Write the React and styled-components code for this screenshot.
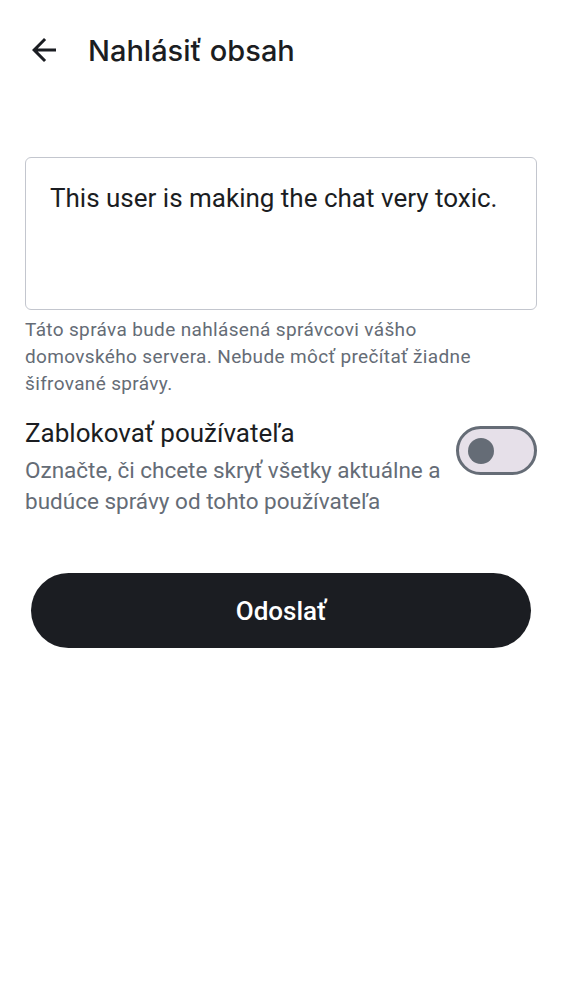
import { useState } from "react";
import styled, { createGlobalStyle } from "styled-components";

const Global = createGlobalStyle`
  html, body { margin: 0; padding: 0; background: #fff; }
  body { font-family: Roboto, "Noto Sans", sans-serif; }
`;

const Page = styled.div`
  width: 562px;
  min-height: 1000px;
  background: #fff;
  display: flex;
  flex-direction: column;
`;

const TopBar = styled.header`
  height: 100px;
  display: flex;
  align-items: center;
  padding: 0 0 0 26px;
  gap: 26px;
  box-sizing: border-box;
`;

const BackButton = styled.button`
  width: 36px;
  height: 36px;
  padding: 0;
  border: none;
  background: none;
  display: flex;
  align-items: center;
  justify-content: center;
  color: #1b1d22;
  cursor: pointer;
`;

const Title = styled.h1`
  margin: 0;
  font-family: Inter, Roboto, sans-serif;
  font-size: 29px;
  font-weight: 500;
  color: #1b1d22;
`;

const Content = styled.main`
  padding: 57px 25px 0 25px;
  display: flex;
  flex-direction: column;
`;

const TextArea = styled.textarea`
  box-sizing: border-box;
  width: 512px;
  height: 153px;
  resize: none;
  border: 1.5px solid #c3c6ce;
  border-radius: 6px;
  padding: 25px 24px;
  font-family: Roboto, sans-serif;
  font-size: 26px;
  line-height: 30px;
  color: #1b1d22;
  outline: none;
`;

const Helper = styled.p`
  margin: 6px 30px 0 0;
  font-size: 19px;
  line-height: 27px;
  letter-spacing: 0.35px;
  color: #656c76;
`;

const ToggleRow = styled.div`
  margin-top: 20px;
  display: flex;
  align-items: flex-start;
  justify-content: space-between;
  gap: 12px;
`;

const ToggleText = styled.div`
  display: flex;
  flex-direction: column;
`;

const ToggleLabel = styled.div`
  font-size: 26px;
  line-height: 32px;
  color: #1b1d22;
`;

const ToggleDesc = styled.div`
  margin-top: 6px;
  font-size: 22.5px;
  line-height: 31px;
  color: #656c76;
`;

const Switch = styled.button`
  flex: none;
  margin-top: 9px;
  width: 81px;
  height: 49px;
  box-sizing: border-box;
  border-radius: 25px;
  border: 3px solid #656c76;
  background: ${(p) => (p.$on ? "#1b1d22" : "#e6e0e9")};
  padding: 0;
  position: relative;
  cursor: pointer;
`;

const Thumb = styled.span`
  position: absolute;
  top: 50%;
  left: ${(p) => (p.$on ? "43px" : "9px")};
  width: 26px;
  height: 26px;
  margin-top: -13px;
  border-radius: 50%;
  background: ${(p) => (p.$on ? "#fff" : "#656c76")};
`;

const Submit = styled.button`
  margin: 56px 6px 0 6px;
  height: 75px;
  border: none;
  border-radius: 38px;
  background: #1b1d22;
  color: #fff;
  font-family: Roboto, sans-serif;
  font-size: 26px;
  font-weight: 500;
  cursor: pointer;
`;

const App = () => {
  const [text, setText] = useState("This user is making the chat very toxic.");
  const [block, setBlock] = useState(false);

  return (
    <Page>
      <Global />
      <TopBar>
        <BackButton aria-label="Späť">
          <svg width="36" height="36" viewBox="0 0 24 24" fill="currentColor">
            <path d="M20 11H7.83l5.59-5.59L12 4l-8 8 8 8 1.41-1.41L7.83 13H20v-2z" />
          </svg>
        </BackButton>
        <Title>Nahlásiť obsah</Title>
      </TopBar>

      <Content>
        <TextArea value={text} onChange={(e) => setText(e.target.value)} />
        <Helper>
          Táto správa bude nahlásená správcovi vášho domovského servera.
          Nebude môcť prečítať žiadne šifrované správy.
        </Helper>

        <ToggleRow>
          <ToggleText>
            <ToggleLabel>Zablokovať používateľa</ToggleLabel>
            <ToggleDesc>
              Označte, či chcete skryť všetky aktuálne a budúce správy od
              tohto používateľa
            </ToggleDesc>
          </ToggleText>
          <Switch $on={block} onClick={() => setBlock(!block)}>
            <Thumb $on={block} />
          </Switch>
        </ToggleRow>

        <Submit>Odoslať</Submit>
      </Content>
    </Page>
  );
};

export default App;
